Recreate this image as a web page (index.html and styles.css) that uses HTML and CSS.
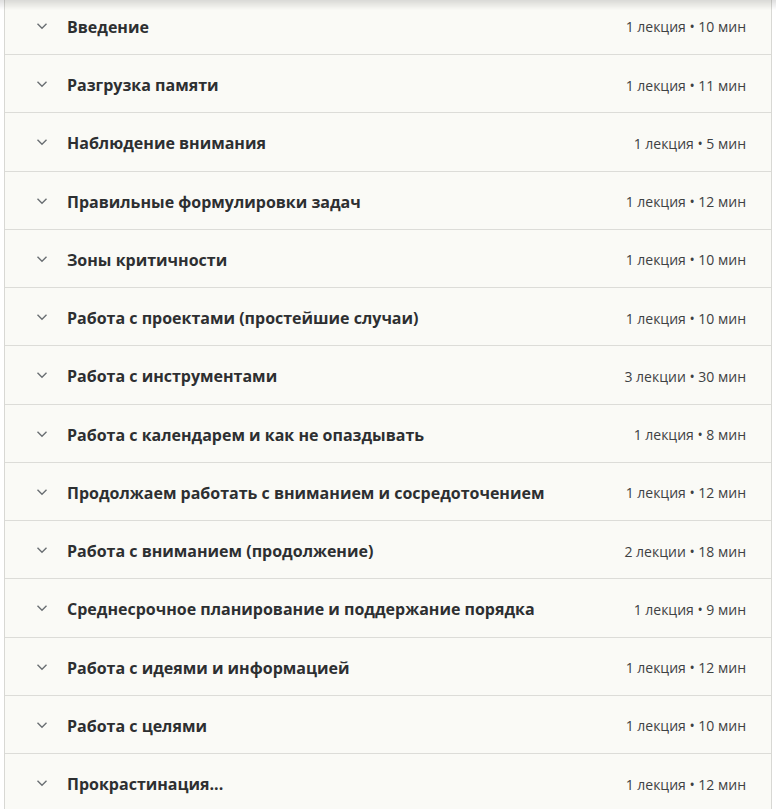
FILE: index.html
```html
<!DOCTYPE html>
<html lang="ru">
<head>
<meta charset="utf-8">
<title>Курс</title>
<link rel="stylesheet" href="styles.css">
</head>
<body>
<div class="top-shadow"></div>
<div class="curriculum">
  <div class="section"><span class="chev"><svg viewBox="0 0 12 8" width="12" height="8"><path d="M1.5 1.8 6 6.2 10.5 1.8" fill="none" stroke="currentColor" stroke-width="1.4"/></svg></span><span class="title">Введение</span><span class="meta">1 лекция • 10 мин</span></div>
  <div class="section"><span class="chev"><svg viewBox="0 0 12 8" width="12" height="8"><path d="M1.5 1.8 6 6.2 10.5 1.8" fill="none" stroke="currentColor" stroke-width="1.4"/></svg></span><span class="title">Разгрузка памяти</span><span class="meta">1 лекция • 11 мин</span></div>
  <div class="section"><span class="chev"><svg viewBox="0 0 12 8" width="12" height="8"><path d="M1.5 1.8 6 6.2 10.5 1.8" fill="none" stroke="currentColor" stroke-width="1.4"/></svg></span><span class="title">Наблюдение внимания</span><span class="meta">1 лекция • 5 мин</span></div>
  <div class="section"><span class="chev"><svg viewBox="0 0 12 8" width="12" height="8"><path d="M1.5 1.8 6 6.2 10.5 1.8" fill="none" stroke="currentColor" stroke-width="1.4"/></svg></span><span class="title">Правильные формулировки задач</span><span class="meta">1 лекция • 12 мин</span></div>
  <div class="section"><span class="chev"><svg viewBox="0 0 12 8" width="12" height="8"><path d="M1.5 1.8 6 6.2 10.5 1.8" fill="none" stroke="currentColor" stroke-width="1.4"/></svg></span><span class="title">Зоны критичности</span><span class="meta">1 лекция • 10 мин</span></div>
  <div class="section"><span class="chev"><svg viewBox="0 0 12 8" width="12" height="8"><path d="M1.5 1.8 6 6.2 10.5 1.8" fill="none" stroke="currentColor" stroke-width="1.4"/></svg></span><span class="title">Работа с проектами (простейшие случаи)</span><span class="meta">1 лекция • 10 мин</span></div>
  <div class="section"><span class="chev"><svg viewBox="0 0 12 8" width="12" height="8"><path d="M1.5 1.8 6 6.2 10.5 1.8" fill="none" stroke="currentColor" stroke-width="1.4"/></svg></span><span class="title">Работа с инструментами</span><span class="meta">3 лекции • 30 мин</span></div>
  <div class="section"><span class="chev"><svg viewBox="0 0 12 8" width="12" height="8"><path d="M1.5 1.8 6 6.2 10.5 1.8" fill="none" stroke="currentColor" stroke-width="1.4"/></svg></span><span class="title">Работа с календарем и как не опаздывать</span><span class="meta">1 лекция • 8 мин</span></div>
  <div class="section"><span class="chev"><svg viewBox="0 0 12 8" width="12" height="8"><path d="M1.5 1.8 6 6.2 10.5 1.8" fill="none" stroke="currentColor" stroke-width="1.4"/></svg></span><span class="title">Продолжаем работать с вниманием и сосредоточением</span><span class="meta">1 лекция • 12 мин</span></div>
  <div class="section"><span class="chev"><svg viewBox="0 0 12 8" width="12" height="8"><path d="M1.5 1.8 6 6.2 10.5 1.8" fill="none" stroke="currentColor" stroke-width="1.4"/></svg></span><span class="title">Работа с вниманием (продолжение)</span><span class="meta">2 лекции • 18 мин</span></div>
  <div class="section"><span class="chev"><svg viewBox="0 0 12 8" width="12" height="8"><path d="M1.5 1.8 6 6.2 10.5 1.8" fill="none" stroke="currentColor" stroke-width="1.4"/></svg></span><span class="title">Среднесрочное планирование и поддержание порядка</span><span class="meta">1 лекция • 9 мин</span></div>
  <div class="section"><span class="chev"><svg viewBox="0 0 12 8" width="12" height="8"><path d="M1.5 1.8 6 6.2 10.5 1.8" fill="none" stroke="currentColor" stroke-width="1.4"/></svg></span><span class="title">Работа с идеями и информацией</span><span class="meta">1 лекция • 12 мин</span></div>
  <div class="section"><span class="chev"><svg viewBox="0 0 12 8" width="12" height="8"><path d="M1.5 1.8 6 6.2 10.5 1.8" fill="none" stroke="currentColor" stroke-width="1.4"/></svg></span><span class="title">Работа с целями</span><span class="meta">1 лекция • 10 мин</span></div>
  <div class="section"><span class="chev"><svg viewBox="0 0 12 8" width="12" height="8"><path d="M1.5 1.8 6 6.2 10.5 1.8" fill="none" stroke="currentColor" stroke-width="1.4"/></svg></span><span class="title">Прокрастинация...</span><span class="meta">1 лекция • 12 мин</span></div>
</div>
</body>
</html>
```

FILE: styles.css
```css
html, body {
  margin: 0;
  padding: 0;
  background: #ffffff;
  overflow: hidden;
}

body {
  font-family: "Open Sans", "Noto Sans", sans-serif;
  color: #2d2f31;
}

.top-shadow {
  position: fixed;
  top: 0;
  left: 0;
  right: 0;
  height: 10px;
  background: linear-gradient(to bottom, rgba(0, 0, 0, 0.13), rgba(0, 0, 0, 0));
  pointer-events: none;
  z-index: 2;
}

.curriculum {
  margin: -3.25px 0 0 4px;
  width: 766px;
  border-left: 1px solid #d8d8d4;
  border-right: 1px solid #d8d8d4;
  background: #fafaf6;
}

.section {
  display: flex;
  align-items: center;
  height: 57.25px;
  padding: 0 25px 0 31px;
  border-bottom: 1px solid #dcdcd8;
}

.chev {
  display: flex;
  width: 12px;
  color: #6a6f73;
  margin-top: 1px;
}

.title {
  flex: 1;
  margin-left: 19px;
  font-size: 16px;
  font-weight: 700;
  color: #2d2f31;
  padding-top: 3px;
}

.meta {
  font-size: 14px;
  color: #3e4143;
  padding-top: 3px;
}
```
